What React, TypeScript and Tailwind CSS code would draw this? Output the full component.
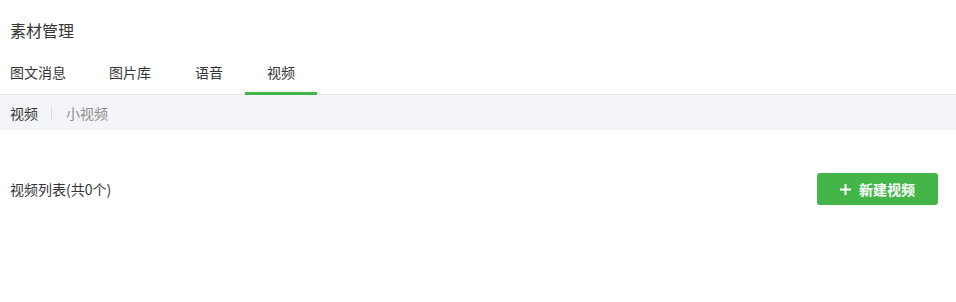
import React, { useState } from "react";

const tabs = ["图文消息", "图片库", "语音", "视频"];

const App = () => {
  const [active, setActive] = useState(3);
  const [sub, setSub] = useState(0);
  const videos: string[] = [];

  return (
    <div
      className="w-[956px] h-[302px] bg-white text-[#353535]"
      style={{ fontFamily: '"Noto Sans CJK SC", "Noto Sans", sans-serif' }}
    >
      {/* 标题 */}
      <div className="h-[59px] flex items-center pl-[10px] text-base">素材管理</div>

      {/* 一级标签 */}
      <div className="flex border-b border-[#e7e7eb] text-sm pt-px">
        {tabs.map((t, i) => (
          <button
            key={t}
            onClick={() => setActive(i)}
            className={`-mb-px leading-6 pb-2 border-b-[3px] ${i === 0 ? "ml-[10px] pr-[21px]" : "px-[22px]"} ${
              active === i ? "border-[#44b549]" : "border-transparent"
            }`}
          >
            {t}
          </button>
        ))}
      </div>

      {/* 二级导航 */}
      <div className="h-[35px] bg-[#f4f5f9] flex items-center pl-[10px] text-sm">
        {["视频", "小视频"].map((s, i) => (
          <React.Fragment key={s}>
            {i > 0 && <span className="w-px h-[14px] bg-[#dcdde0] ml-[13px] mr-[14px]" />}
            <button onClick={() => setSub(i)} className={sub === i ? "text-[#353535]" : "text-[#8d8d8d]"}>
              {s}
            </button>
          </React.Fragment>
        ))}
      </div>

      {/* 列表头 */}
      <div className="mt-[43px] flex items-center justify-between pl-[10px] pr-[18px]">
        <span className="text-sm">视频列表(共{videos.length}个)</span>
        <button className="w-[121px] h-8 rounded-[3px] bg-[#44b549] text-white text-sm font-bold flex items-center justify-center gap-2">
          <svg width="11" height="11" viewBox="0 0 11 11">
            <path d="M5.5 0v11M0 5.5h11" stroke="white" strokeWidth="2" />
          </svg>
          新建视频
        </button>
      </div>
    </div>
  );
};

export default App;
